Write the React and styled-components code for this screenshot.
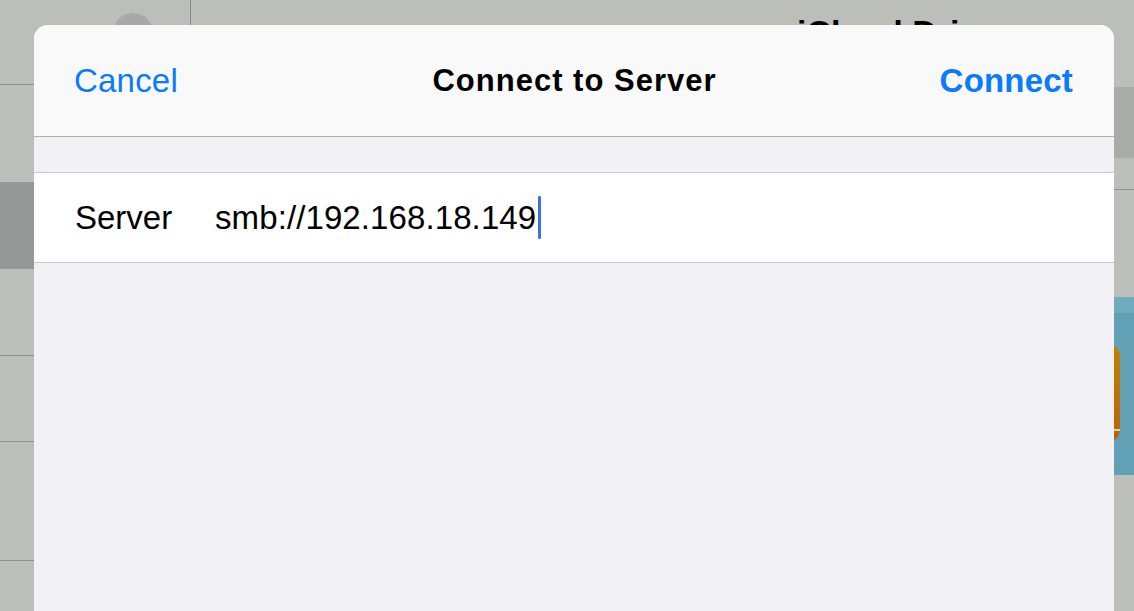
import React from "react";
import styled, { createGlobalStyle } from "styled-components";

const Global = createGlobalStyle`
  html, body { margin: 0; padding: 0; width: 100%; height: 100%; overflow: hidden; }
  body { font-family: "Liberation Sans", Arial, sans-serif; background: #bcbeba; }
  #root { width: 1134px; height: 611px; position: relative; overflow: hidden; }
`;

const Backdrop = styled.div`
  display: flex;
  width: 1134px;
  height: 611px;
  background: #bcbeba;
`;

const Sidebar = styled.div`
  width: 190px;
  flex-shrink: 0;
  border-right: 1px solid #8a8c8a;
  display: flex;
  flex-direction: column;
`;

const AvatarArea = styled.div`
  height: 85px;
  box-sizing: border-box;
  border-bottom: 1px solid #8f918f;
  display: flex;
  justify-content: flex-end;
  padding: 13px 37px 0 0;
`;

const Avatar = styled.div`
  width: 40px;
  height: 40px;
  border-radius: 50%;
  background: #a7a9a6;
`;

const SideRow = styled.div`
  height: ${(p) => p.h}px;
  flex-shrink: 0;
  box-sizing: border-box;
  background: ${(p) => (p.selected ? "#959897" : "transparent")};
  border-bottom: ${(p) => (p.line ? "1px solid #8f918f" : "none")};
`;

const Main = styled.div`
  flex: 1;
  display: flex;
  flex-direction: column;
`;

const MainHeader = styled.div`
  height: 87px;
  flex-shrink: 0;
  padding-left: 606px;
  box-sizing: border-box;
`;

const BigTitle = styled.div`
  font-size: 34px;
  font-weight: 700;
  color: #000;
  line-height: 40px;
  margin-top: 12px;
`;

const SearchBand = styled.div`
  height: 71px;
  flex-shrink: 0;
  background: #aaaca9;
`;

const ToolBand = styled.div`
  height: 31px;
  flex-shrink: 0;
  border-bottom: 1px solid #8f918f;
`;

const Grid = styled.div`
  display: flex;
  justify-content: flex-end;
  padding-top: 107px;
`;

const Tile = styled.div`
  width: 180px;
  height: 178px;
  background: #62a1b5;
  border-top: 16px solid #70abbe;
  box-sizing: border-box;
  display: flex;
  justify-content: flex-start;
  padding: 30px 0 0 14px;
  margin-right: -26px;
`;

const TileIcon = styled.div`
  width: 126px;
  height: 100px;
  border-radius: 14px;
  background: linear-gradient(#c48000, #b8620a);
  position: relative;
  &::after {
    content: "";
    position: absolute;
    left: 0;
    right: 0;
    top: 86px;
    height: 2px;
    background: #d8cfc0;
  }
`;

const Modal = styled.div`
  position: absolute;
  left: 34px;
  top: 25px;
  width: 1080px;
  height: 620px;
  background: #f1f1f6;
  border-radius: 14px 14px 0 0;
  overflow: hidden;
  display: flex;
  flex-direction: column;
`;

const NavBar = styled.div`
  height: 111px;
  flex-shrink: 0;
  background: #f9f9f9;
  border-bottom: 1px solid #b1b1b3;
  display: grid;
  grid-template-columns: 1fr auto 1fr;
  align-items: center;
  padding: 0 41px 0 40px;
  box-sizing: content-box;
`;

const BarButton = styled.button`
  all: unset;
  justify-self: ${(p) => (p.end ? "end" : "start")};
  font-family: "Liberation Sans", Arial, sans-serif;
  font-size: 33px;
  font-weight: ${(p) => (p.bold ? 700 : 400)};
  letter-spacing: 0.2px;
  color: #0a7aff;
  line-height: 40px;
  cursor: pointer;
`;

const NavTitle = styled.div`
  font-size: 31px;
  font-weight: 700;
  letter-spacing: 1px;
  color: #000;
  line-height: 40px;
  margin-left: 2px;
`;

const Spacer = styled.div`
  height: 35px;
  flex-shrink: 0;
`;

const FieldRow = styled.div`
  height: 89px;
  flex-shrink: 0;
  background: #fff;
  border-top: 1px solid #c8c7cc;
  border-bottom: 1px solid #c8c7cc;
  display: flex;
  align-items: center;
  padding-left: 41px;
`;

const FieldLabel = styled.div`
  width: 140px;
  font-size: 33px;
  color: #000;
  line-height: 40px;
`;

const FieldValue = styled.div`
  display: flex;
  align-items: center;
  font-size: 33px;
  letter-spacing: 0.1px;
  color: #000;
  line-height: 40px;
`;

const Caret = styled.span`
  display: inline-block;
  width: 3px;
  height: 43px;
  margin-left: 2px;
  border-radius: 1px;
  background: #3d6ff2;
`;

export default function App() {
  return (
    <>
      <Global />
      <Backdrop>
        <Sidebar>
          <AvatarArea>
            <Avatar />
          </AvatarArea>
          <SideRow h={97} />
          <SideRow h={87} selected />
          <SideRow h={87} line />
          <SideRow h={86} line />
          <SideRow h={119} line />
        </Sidebar>
        <Main>
          <MainHeader>
            <BigTitle>iCloud Drive</BigTitle>
          </MainHeader>
          <SearchBand />
          <ToolBand />
          <Grid>
            <Tile>
              <TileIcon />
            </Tile>
          </Grid>
        </Main>
      </Backdrop>
      <Modal>
        <NavBar>
          <BarButton>Cancel</BarButton>
          <NavTitle>Connect to Server</NavTitle>
          <BarButton end bold>
            Connect
          </BarButton>
        </NavBar>
        <Spacer />
        <FieldRow>
          <FieldLabel>Server</FieldLabel>
          <FieldValue>
            smb://192.168.18.149
            <Caret />
          </FieldValue>
        </FieldRow>
      </Modal>
    </>
  );
}
